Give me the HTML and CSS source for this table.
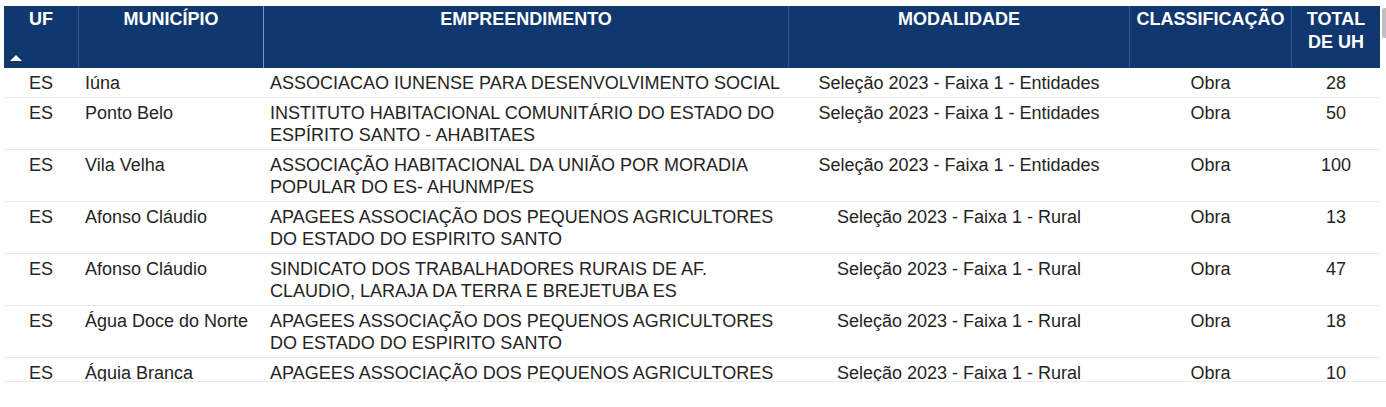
FILE: index.html
```html
<!DOCTYPE html>
<html lang="pt-BR">
<head>
<meta charset="utf-8">
<title>Empreendimentos</title>
<link rel="stylesheet" href="styles.css">
</head>
<body>
<div class="table-frame">
  <div class="table-scroll">
    <table class="grid">
      <colgroup>
        <col class="c-uf">
        <col class="c-mun">
        <col class="c-emp">
        <col class="c-mod">
        <col class="c-cls">
        <col class="c-tot">
      </colgroup>
      <thead>
        <tr>
          <th class="h-uf">UF<span class="sort-up"></span></th>
          <th>MUNICÍPIO</th>
          <th class="h-active">EMPREENDIMENTO</th>
          <th>MODALIDADE</th>
          <th>CLASSIFICAÇÃO</th>
          <th>TOTAL DE UH</th>
        </tr>
      </thead>
      <tbody>
        <tr>
          <td class="center">ES</td>
          <td>Iúna</td>
          <td>ASSOCIACAO IUNENSE PARA DESENVOLVIMENTO SOCIAL</td>
          <td class="center">Seleção 2023 - Faixa 1 - Entidades</td>
          <td class="center">Obra</td>
          <td class="center">28</td>
        </tr>
        <tr>
          <td class="center">ES</td>
          <td>Ponto Belo</td>
          <td>INSTITUTO HABITACIONAL COMUNITÁRIO DO ESTADO DO ESPÍRITO SANTO - AHABITAES</td>
          <td class="center">Seleção 2023 - Faixa 1 - Entidades</td>
          <td class="center">Obra</td>
          <td class="center">50</td>
        </tr>
        <tr>
          <td class="center">ES</td>
          <td>Vila Velha</td>
          <td>ASSOCIAÇÃO HABITACIONAL DA UNIÃO POR MORADIA POPULAR DO ES- AHUNMP/ES</td>
          <td class="center">Seleção 2023 - Faixa 1 - Entidades</td>
          <td class="center">Obra</td>
          <td class="center">100</td>
        </tr>
        <tr>
          <td class="center">ES</td>
          <td>Afonso Cláudio</td>
          <td>APAGEES ASSOCIAÇÃO DOS PEQUENOS AGRICULTORES DO ESTADO DO ESPIRITO SANTO</td>
          <td class="center">Seleção 2023 - Faixa 1 - Rural</td>
          <td class="center">Obra</td>
          <td class="center">13</td>
        </tr>
        <tr>
          <td class="center">ES</td>
          <td>Afonso Cláudio</td>
          <td>SINDICATO DOS TRABALHADORES RURAIS DE AF. CLAUDIO, LARAJA DA TERRA E BREJETUBA ES</td>
          <td class="center">Seleção 2023 - Faixa 1 - Rural</td>
          <td class="center">Obra</td>
          <td class="center">47</td>
        </tr>
        <tr>
          <td class="center">ES</td>
          <td>Água Doce do Norte</td>
          <td>APAGEES ASSOCIAÇÃO DOS PEQUENOS AGRICULTORES DO ESTADO DO ESPIRITO SANTO</td>
          <td class="center">Seleção 2023 - Faixa 1 - Rural</td>
          <td class="center">Obra</td>
          <td class="center">18</td>
        </tr>
        <tr>
          <td class="center">ES</td>
          <td>Águia Branca</td>
          <td>APAGEES ASSOCIAÇÃO DOS PEQUENOS AGRICULTORES DO ESTADO DO ESPIRITO SANTO</td>
          <td class="center">Seleção 2023 - Faixa 1 - Rural</td>
          <td class="center">Obra</td>
          <td class="center">10</td>
        </tr>
      </tbody>
    </table>
  </div>
  <div class="scroll-thumb"></div>
</div>
</body>
</html>
```

FILE: styles.css
```css
html, body {
  background: #ffffff;
}

body {
  margin: 6px 0 0 4px;
  font-family: "Liberation Sans", Arial, sans-serif;
  color: #252423;
}

.table-frame {
  position: relative;
}

.table-scroll {
  height: 375px;
  overflow: hidden;
  border-bottom: 1px solid #e9e9e9;
}

.scroll-thumb {
  position: absolute;
  top: 2px;
  right: 0;
  width: 4px;
  height: 30px;
  background: #bfbfbf;
  border-radius: 2px 0 0 2px;
}

.grid {
  width: 1376px;
  table-layout: fixed;
  border-collapse: separate;
  border-spacing: 0;
}

.c-uf { width: 74px; }
.c-mun { width: 185px; }
.c-emp { width: 525px; }
.c-mod { width: 341px; }
.c-cls { width: 162px; }
.c-tot { width: 89px; }

.grid th {
  position: sticky;
  top: 0;
  background: #10386f;
  color: #ffffff;
  font-size: 18px;
  font-weight: bold;
  line-height: 23px;
  text-align: center;
  vertical-align: top;
  padding: 2px 1px 14px;
  border-left: 1px solid #2c5790;
}

.grid th:first-child {
  border-left: none;
}

.grid th.h-active {
  border-left-color: #6f97cb;
}

.sort-up {
  position: absolute;
  left: 6px;
  bottom: 7px;
  width: 0;
  height: 0;
  border-left: 6px solid transparent;
  border-right: 6px solid transparent;
  border-bottom: 6px solid #ffffff;
}

.grid td {
  font-size: 18px;
  line-height: 22px;
  padding: 4px 2px 3px 6px;
  vertical-align: top;
  text-align: left;
  border-bottom: 1px solid #e6e6e6;
  border-left: 1px solid #ffffff;
}

.grid td:first-child {
  border-left: none;
}

.grid td.center {
  text-align: center;
  padding-left: 2px;
}
```
